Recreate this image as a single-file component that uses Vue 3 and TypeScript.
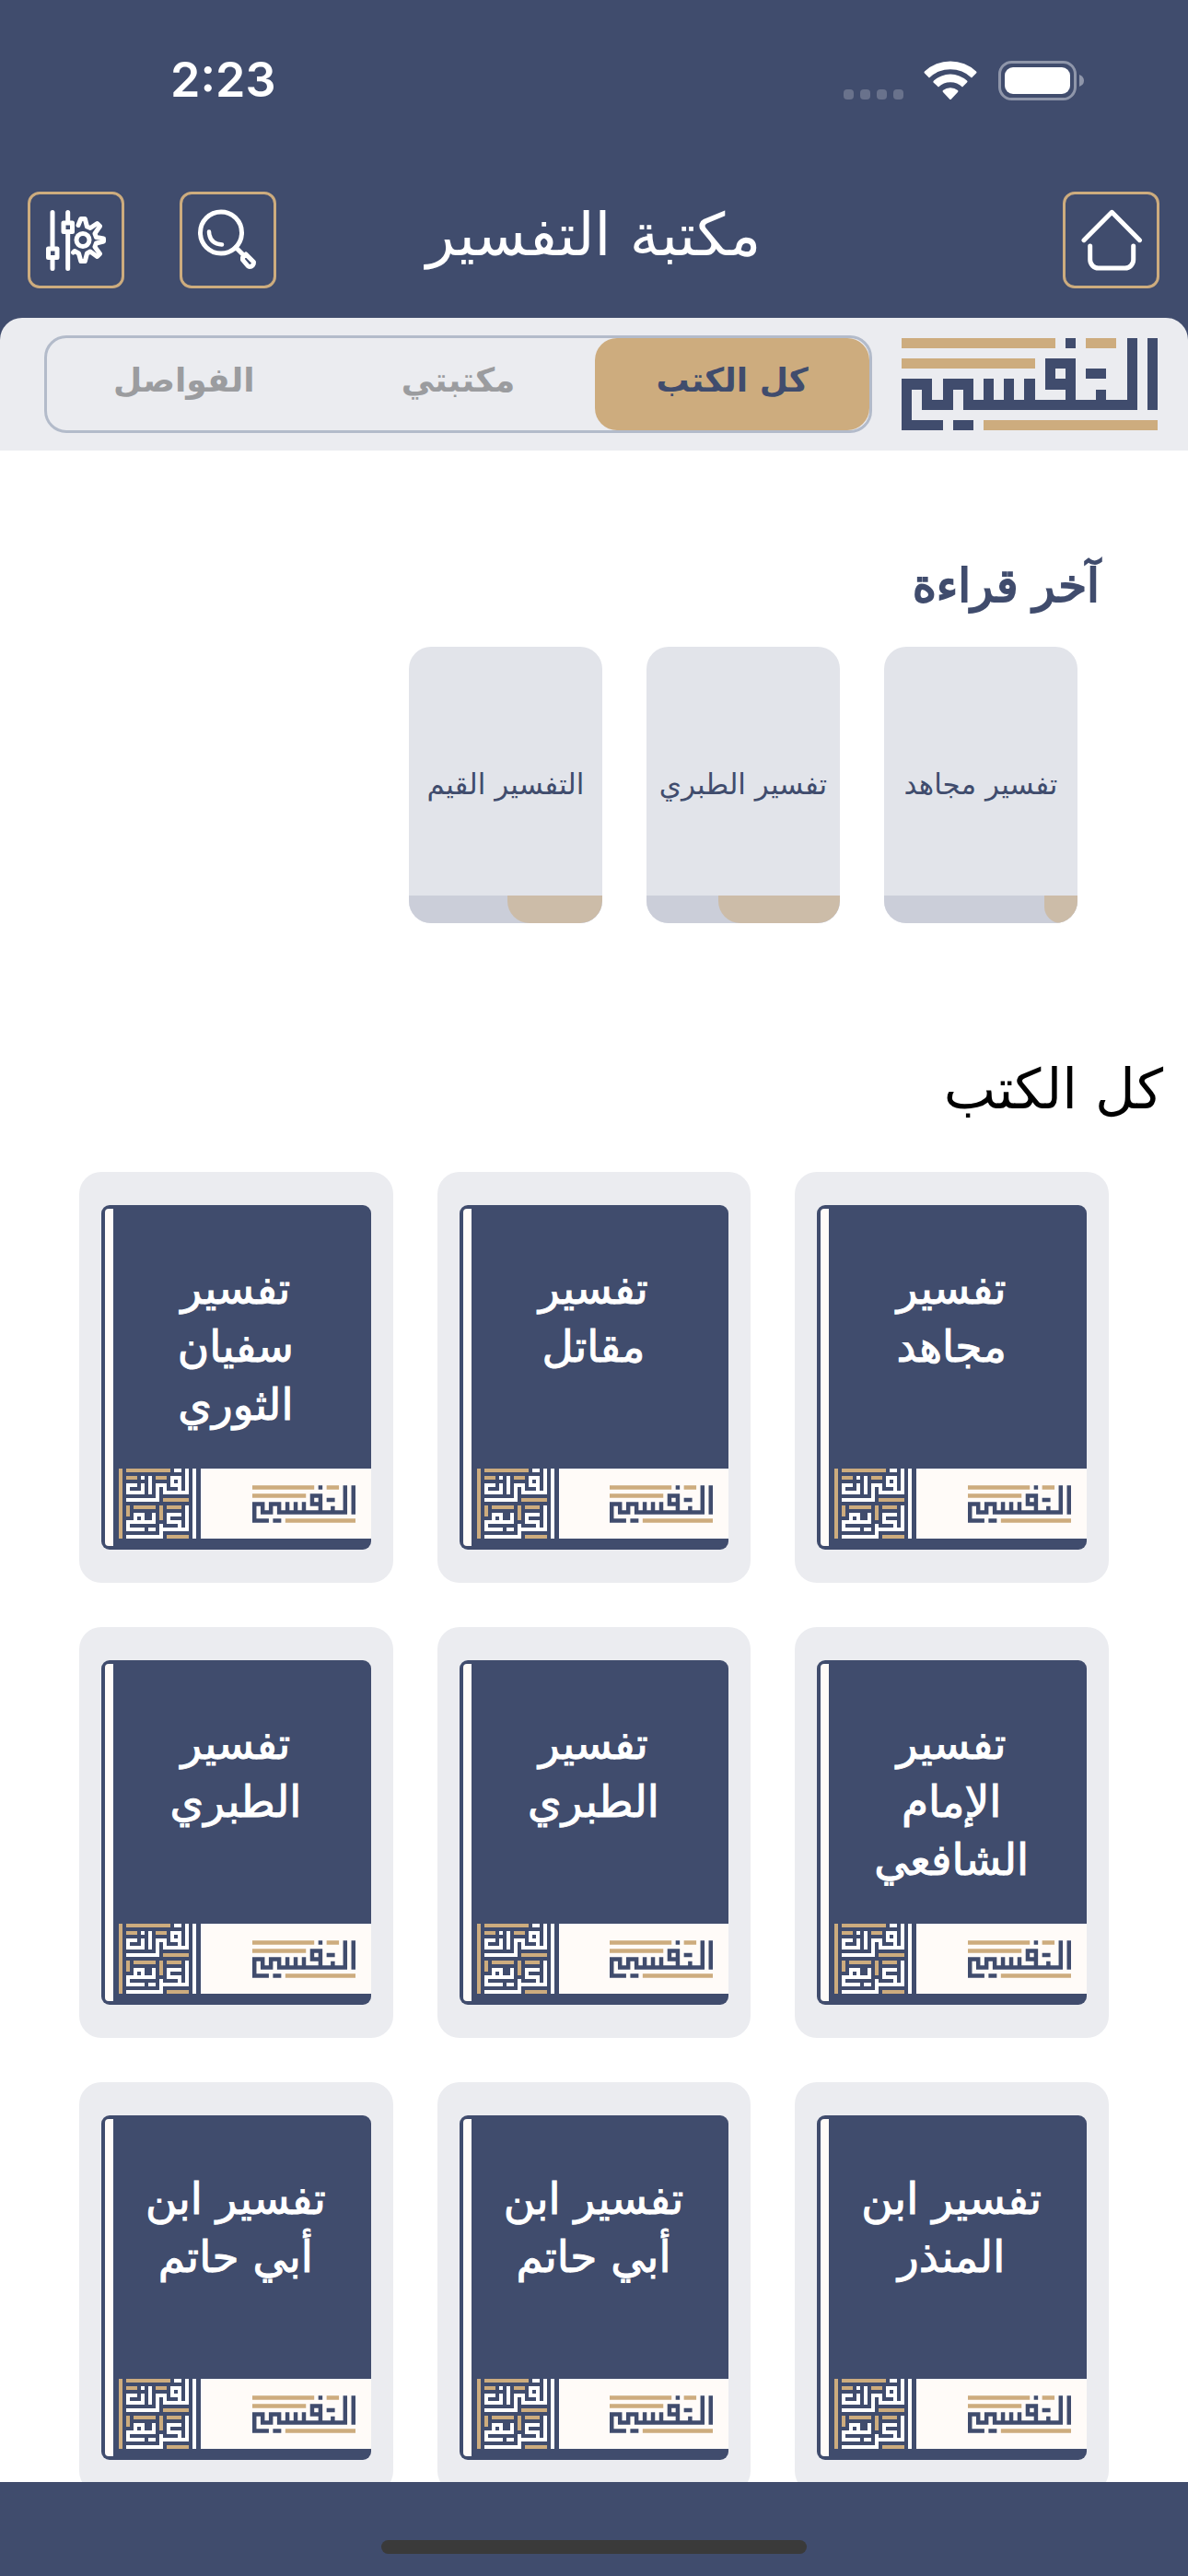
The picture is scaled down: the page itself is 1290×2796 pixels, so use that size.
<script setup lang="ts">
import { ref } from 'vue'

interface Recent {
  title: string
  progress: number
}

interface Book {
  id: number
  lines: string[]
}

// Horizontal and vertical bars on a unit grid: x, y, width, height
type Bar = [number, number, number, number]

const tabs: string[] = ['كل الكتب', 'مكتبتي', 'الفواصل']
const activeTab = ref(0)

const recents: Recent[] = [
  { title: 'تفسير مجاهد', progress: 17 },
  { title: 'تفسير الطبري', progress: 63 },
  { title: 'التفسير القيم', progress: 49 },
]

const books: Book[] = [
  { id: 1, lines: ['تفسير', 'مجاهد'] },
  { id: 2, lines: ['تفسير', 'مقاتل'] },
  { id: 3, lines: ['تفسير', 'سفيان', 'الثوري'] },
  { id: 4, lines: ['تفسير', 'الإمام', 'الشافعي'] },
  { id: 5, lines: ['تفسير', 'الطبري'] },
  { id: 6, lines: ['تفسير', 'الطبري'] },
  { id: 7, lines: ['تفسير ابن', 'المنذر'] },
  { id: 8, lines: ['تفسير ابن', 'أبي حاتم'] },
  { id: 9, lines: ['تفسير ابن', 'أبي حاتم'] },
]

const logoGold: Bar[] = [
  [0, 0, 15, 1], [18, 0, 3, 1], [0, 2, 13, 1], [8, 8, 17, 1],
]
const logoNavy: Bar[] = [
  [16, 0, 1, 1], [24, 0, 1, 7], [22, 0, 1, 7], [6, 6, 17, 1], [19, 5, 1, 2],
  [18, 3, 2, 1], [14, 2, 3, 1], [14, 2, 1, 3], [14, 4, 3, 1], [16, 2, 1, 5],
  [12, 4, 1, 3], [10, 4, 1, 3], [8, 4, 1, 3], [4, 4, 3, 1], [6, 4, 1, 3],
  [4, 4, 1, 3], [2, 6, 3, 1], [2, 4, 1, 3], [0, 4, 3, 1], [0, 4, 1, 5],
  [0, 8, 4, 1], [5, 8, 2, 1],
]

const sealGold: Bar[] = [
  [0, 0, 1, 19], [2, 0, 12, 1], [2, 2, 3, 1], [10, 2, 3, 1], [12, 8, 7, 1],
  [2, 10, 1, 3], [4, 10, 6, 1], [11, 10, 1, 4], [13, 10, 4, 1], [13, 18, 6, 1],
]
const sealWhite: Bar[] = [
  [20, 0, 1, 19], [15, 0, 2, 1], [18, 0, 1, 7], [6, 2, 1, 1], [8, 2, 1, 5],
  [14, 2, 3, 1], [14, 2, 1, 3], [14, 4, 3, 1], [16, 2, 1, 5], [12, 6, 7, 1],
  [12, 4, 1, 3], [10, 4, 3, 1], [10, 4, 1, 5], [2, 8, 9, 1], [2, 4, 3, 1],
  [2, 4, 1, 3], [2, 6, 5, 1], [6, 4, 1, 3], [18, 10, 1, 7], [11, 16, 8, 1],
  [13, 12, 4, 1], [13, 12, 1, 3], [13, 14, 4, 1], [16, 14, 1, 3],
  [11, 15, 1, 4], [2, 18, 10, 1], [2, 14, 8, 1], [9, 12, 1, 3], [4, 12, 3, 1],
  [4, 12, 1, 3], [6, 12, 1, 3], [2, 14, 1, 3], [2, 16, 5, 1], [8, 16, 2, 1],
]

const toPath = (bars: Bar[]): string =>
  bars.map(([x, y, w, h]) => `M${x} ${y}h${w}v${h}h-${w}z`).join('')

const logoGoldPath = toPath(logoGold)
const logoNavyPath = toPath(logoNavy)
const sealGoldPath = toPath(sealGold)
const sealWhitePath = toPath(sealWhite)
</script>

<template>
  <div class="app" dir="rtl">
    <header class="top">
      <div class="status" dir="ltr">
        <span class="clock">2:23</span>
        <div class="indicators">
          <span class="signal"><i></i><i></i><i></i><i></i></span>
          <svg class="wifi" viewBox="0 0 58 43" aria-hidden="true">
            <path d="M1 13.500Q0 12.500 1 11.500A41 41 0 0 1 57 11.500Q58 12.500 57 13.500L52 18.500A33 33 0 0 0 6 18.500Z" />
            <path d="M10.500 23.500Q10 22.500 11 21.500A27 27 0 0 1 47 21.500Q48 22.500 47 23.500L42 28.500A19 19 0 0 0 16 28.500Z" />
            <path d="M21 34Q20 33 21 32A13 13 0 0 1 37 32Q38 33 37 34L30 41.500Q29 42.500 28 41.500Z" />
          </svg>
          <svg class="battery" viewBox="0 0 94 43" aria-hidden="true">
            <rect x="1.500" y="1.500" width="82" height="40" rx="13" fill="none" stroke="#8f96aa" stroke-width="3" />
            <rect x="7" y="7" width="71" height="29" rx="9" fill="#fff" />
            <path d="M88 15q5 2 5 6.500t-5 6.500z" fill="#8f96aa" />
          </svg>
        </div>
      </div>
      <nav class="bar">
        <div class="side">
          <button class="tool" type="button" aria-label="الرئيسية">
            <svg viewBox="19 19 67 67" aria-hidden="true">
              <path d="M23 52.700L53.300 22.300L83.500 52.700" />
              <path d="M29.700 59V74a9 9 0 0 0 9 9H67.700a9 9 0 0 0 9-9V59" />
            </svg>
          </button>
        </div>
        <h1 class="title">مكتبة التفسير</h1>
        <div class="side end">
          <button class="tool" type="button" aria-label="بحث">
            <svg viewBox="19 19 67 67" aria-hidden="true">
              <circle cx="45" cy="44.500" r="22.500" />
              <path d="M32 43.500Q32.500 56.500 46 57.500" stroke-width="4.500" />
              <path d="M61 60.500L68 67.500" />
              <path d="M68.500 71.500L72 68L80.500 76.500A4.500 4.500 0 0 1 76 81.500Q75 81.500 74 80.500L68.500 74Z" />
            </svg>
          </button>
          <button class="tool" type="button" aria-label="الإعدادات">
            <svg viewBox="19 19 67 67" aria-hidden="true">
              <path d="M27 22.500V61M27 72V83.500M43.700 22.500V32M43.700 45V83.500" />
              <rect x="22.500" y="62" width="9.500" height="9.500" />
              <rect x="39" y="34" width="9.500" height="9.500" />
              <circle cx="60" cy="52.500" r="7" />
              <path d="M55 36.500L57.800 29.500H62.300L64.500 38L68 39.500L75.500 34.500L78.500 37.500L73 45.500L74.500 49.500L82.500 51V54L74.500 56L73 60L78.500 67.500L75.500 70.500L68 65L64.500 67L62.300 75.500H57.800L55.500 67L51 64.500L49.500 66" />
            </svg>
          </button>
        </div>
      </nav>
    </header>

    <div class="panel-wrap">
      <div class="panel">
        <svg class="logo" viewBox="0 0 25 9" role="img" aria-label="التفسير" shape-rendering="crispEdges">
          <path class="gold" :d="logoGoldPath" />
          <path class="navy" :d="logoNavyPath" />
        </svg>
        <div class="tabs" role="tablist">
          <button
            v-for="(tab, i) in tabs"
            :key="tab"
            class="tab"
            :class="{ active: i === activeTab }"
            type="button"
            role="tab"
            :aria-selected="i === activeTab"
            @click="activeTab = i"
          >
            {{ tab }}
          </button>
        </div>
      </div>
    </div>

    <main class="content">
      <section class="recent">
        <h2 class="recent-heading">آخر قراءة</h2>
        <div class="recent-list">
          <a v-for="item in recents" :key="item.title" class="recent-card" href="#">
            <span class="recent-title">{{ item.title }}</span>
            <span class="track">
              <span class="fill" :style="{ width: item.progress + '%' }"></span>
            </span>
          </a>
        </div>
      </section>

      <section class="library">
        <h2 class="library-heading">كل الكتب</h2>
        <div class="grid">
          <a v-for="book in books" :key="book.id" class="book" href="#">
            <span class="cover">
              <span class="pages"></span>
              <span class="face">
                <span class="name">
                  <span v-for="line in book.lines" :key="line" class="line">{{ line }}</span>
                </span>
                <span class="band">
                  <svg class="seal" viewBox="0 0 21 19" aria-hidden="true" shape-rendering="crispEdges">
                    <path class="gold" :d="sealGoldPath" />
                    <path fill="#fff" :d="sealWhitePath" />
                  </svg>
                  <span class="label">
                    <svg class="mark" viewBox="0 0 25 9" aria-hidden="true">
                      <path class="gold" :d="logoGoldPath" />
                      <path class="navy" :d="logoNavyPath" />
                    </svg>
                  </span>
                </span>
              </span>
            </span>
          </a>
        </div>
      </section>
    </main>

    <footer class="dock"><span class="home-indicator"></span></footer>
  </div>
</template>

<style>
body {
  margin: 0;
}
</style>

<style scoped>
* {
  box-sizing: border-box;
}

.app {
  display: flex;
  flex-direction: column;
  height: 100vh;
  background: #fff;
  color: #404c6d;
  font-family: 'DejaVu Sans', sans-serif;
}

.top {
  flex: none;
  background: #404c6d;
}

.status {
  display: flex;
  align-items: center;
  justify-content: space-between;
  height: 174px;
  padding: 0 112px 0 185px;
  color: #fff;
}

.clock {
  font: 600 52px/64px Inter, sans-serif;
}

.indicators {
  display: flex;
  align-items: flex-end;
}

.signal {
  display: flex;
  gap: 7px;
  margin: 0 22px 1px 0;
}

.signal i {
  width: 11px;
  height: 11px;
  border-radius: 4px;
  background: #69728c;
}

.wifi {
  width: 58px;
  height: 43px;
  margin-right: 23px;
  fill: #fff;
}

.battery {
  width: 94px;
  height: 43px;
}

.bar {
  display: grid;
  grid-template-columns: 1fr auto 1fr;
  align-items: center;
  padding: 34px 31px 32px 30px;
}

.side {
  display: flex;
  gap: 60px;
}

.end {
  justify-content: flex-end;
}

.tool {
  display: grid;
  place-items: center;
  width: 105px;
  height: 105px;
  padding: 0;
  border: 3px solid #cdac7e;
  border-radius: 13px;
  background: none;
}

.tool svg {
  width: 67px;
  height: 67px;
  overflow: visible;
  fill: none;
  stroke: #fff;
  stroke-width: 5;
  stroke-linecap: round;
  stroke-linejoin: round;
}

.title {
  margin: 0;
  padding-bottom: 12px;
  color: #fff;
  font-size: 64px;
  font-weight: 400;
  line-height: 72px;
}

.panel-wrap {
  flex: none;
  background: #404c6d;
}

.panel {
  display: flex;
  align-items: center;
  gap: 32px;
  height: 144px;
  padding: 0 33px 0 48px;
  border-radius: 24px 24px 0 0;
  background: #ebecf0;
}

.logo {
  flex: none;
  width: 278px;
  height: 100px;
}

.gold {
  fill: #cdac7e;
}

.navy {
  fill: #404c6d;
}

.tabs {
  display: flex;
  flex: 1;
  height: 106px;
  border: 3px solid #b3bbca;
  border-radius: 24px;
}

.tab {
  flex: 1;
  padding: 0 0 8px;
  border: 0;
  border-radius: 24px;
  background: none;
  color: #9b9c9f;
  font: 700 36px/48px 'DejaVu Sans', sans-serif;
}

.tab.active {
  background: #cdac7e;
  color: #404c6d;
}

.content {
  flex: 1;
  min-height: 0;
  overflow: hidden;
  padding-top: 111px;
}

.recent-heading,
.library-heading {
  margin: 0;
  font-weight: 400;
  line-height: 72px;
}

.recent-heading {
  padding: 0 96px;
  font-size: 50px;
  -webkit-text-stroke: 2px currentColor;
}

.recent-list {
  display: flex;
  gap: 48px;
  padding: 30px 120px 0;
}

.recent-card {
  display: flex;
  flex-direction: column;
  width: 210px;
  height: 300px;
  overflow: hidden;
  border-radius: 24px;
  background: #e2e4ea;
  color: #404c6d;
  text-decoration: none;
}

.recent-title {
  display: flex;
  flex: 1;
  align-items: center;
  justify-content: center;
  padding-top: 28px;
  font-size: 31px;
  line-height: 48px;
  white-space: nowrap;
}

.track {
  display: flex;
  height: 30px;
  background: #cbced9;
}

.fill {
  border-radius: 0 0 24px 24px;
  background: #ccbca8;
}

.library-heading {
  padding: 144px 27px 0;
  color: #000;
  font-size: 60px;
}

.grid {
  display: grid;
  grid-template-columns: repeat(3, 1fr);
  gap: 48px;
  padding: 54px 86px 48px;
}

.book {
  display: block;
  padding: 36px 24px;
  border-radius: 24px;
  background: #ebecf0;
  text-decoration: none;
}

.cover {
  display: flex;
  flex-direction: row-reverse;
  height: 374px;
  padding: 4px 0 0 4px;
  border-radius: 9px;
  background: #404c6d;
}

.pages {
  width: 9px;
  height: 366px;
  border-radius: 4px 0 0 4px;
  background: #fffbf8;
}

.face {
  display: flex;
  flex: 1;
  flex-direction: column;
  padding-bottom: 12px;
}

.name {
  display: flex;
  flex: 1;
  flex-direction: column;
  padding: 55px 14px 0 0;
  color: #fff;
  font-size: 47px;
  font-weight: 400;
  line-height: 63px;
  text-align: center;
  -webkit-text-stroke: 1px currentColor;
}

.line {
  white-space: nowrap;
}

.band {
  display: flex;
  direction: ltr;
  height: 76px;
  padding-left: 6px;
}

.seal {
  width: 84px;
  height: 76px;
}

.label {
  display: flex;
  flex: 1;
  align-items: center;
  justify-content: flex-end;
  margin-left: 5px;
  padding-right: 17px;
  background: #fffbf8;
}

.mark {
  width: 112px;
  height: 41px;
}

.dock {
  display: flex;
  flex: none;
  align-items: flex-end;
  justify-content: center;
  height: 102px;
  padding-bottom: 24px;
  background: #404c6d;
}

.home-indicator {
  width: 462px;
  height: 15px;
  border-radius: 8px;
  background: #3a3a3a;
}
</style>
